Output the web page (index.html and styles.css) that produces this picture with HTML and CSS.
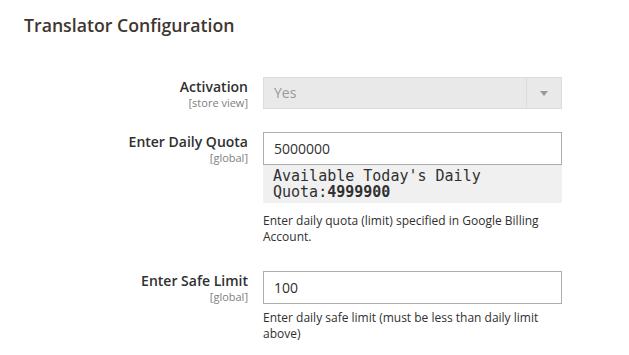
FILE: index.html
```html
<!DOCTYPE html>
<html lang="en">
<head>
    <meta charset="UTF-8">
    <title>Translator Configuration</title>
    <link rel="stylesheet" href="styles.css">
</head>
<body>

    <div class="section">
        <h2 class="section-title">Translator Configuration</h2>

        <!-- Activation -->
        <div class="row row-first">
            <div class="label">
                <span class="label-text">Activation</span>
                <span class="scope">[store view]</span>
            </div>
            <div class="control">
                <div class="select disabled">
                    <span class="select-value">Yes</span>
                    <span class="select-arrow"></span>
                </div>
            </div>
        </div>

        <!-- Daily quota -->
        <div class="row">
            <div class="label">
                <span class="label-text">Enter Daily Quota</span>
                <span class="scope">[global]</span>
            </div>
            <div class="control">
                <input type="text" class="input-text" value="5000000">
                <pre class="quota-box">Available Today's Daily
Quota:<b>4999900</b></pre>
                <p class="note note-quota">Enter daily quota (limit) specified in Google Billing Account.</p>
            </div>
        </div>

        <!-- Safe limit -->
        <div class="row row-safe">
            <div class="label">
                <span class="label-text">Enter Safe Limit</span>
                <span class="scope">[global]</span>
            </div>
            <div class="control">
                <input type="text" class="input-text" value="100">
                <p class="note">Enter daily safe limit (must be less than daily limit above)</p>
            </div>
        </div>
    </div>

</body>
</html>
```

FILE: styles.css
```css
/* Page */
body {
    margin: 0;
    padding: 0;
    background: #ffffff;
    color: #303030;
    font-family: 'Open Sans', 'Liberation Sans', sans-serif;
}

.section {
    padding: 13px 0 0 0;
}

/* Section heading */
.section-title {
    margin: 0 0 0 24px;
    font-size: 17.7px;
    font-weight: 600;
    line-height: 24px;
    color: #41362f;
}

/* Field rows */
.row {
    display: grid;
    grid-template-columns: 248px 299px;
    column-gap: 15px;
    margin-top: 23px;
}

.row-first {
    margin-top: 40px;
}

.row-safe {
    margin-top: 26px;
}

.label {
    display: flex;
    flex-direction: column;
    align-items: flex-end;
    text-align: right;
    padding-top: 1px;
}

.label-text {
    font-size: 14px;
    font-weight: 600;
    line-height: 18px;
    color: #303030;
}

.scope {
    font-size: 11px;
    line-height: 13px;
    color: #808080;
}

/* Select */
.select {
    display: flex;
    height: 32px;
    box-sizing: border-box;
    border: 1px solid #adadad;
}

.select.disabled {
    background: #e9e9e9;
    border-color: #dcdcdc;
}

.select-value {
    flex: 1;
    padding-left: 10px;
    font-size: 14px;
    line-height: 30px;
    color: #999999;
}

.select-arrow {
    width: 34px;
    border-left: 1px solid #dcdcdc;
    position: relative;
}

.select-arrow::after {
    content: '';
    position: absolute;
    top: 13px;
    left: 13px;
    border-left: 4px solid transparent;
    border-right: 4px solid transparent;
    border-top: 5px solid #9a9a9a;
}

/* Inputs */
.input-text {
    display: block;
    width: 299px;
    height: 33px;
    box-sizing: border-box;
    margin: 0;
    padding: 0 10px;
    border: 1px solid #adadad;
    font-family: 'Open Sans', 'Liberation Sans', sans-serif;
    font-size: 14px;
    color: #303030;
    outline: none;
}

/* Remaining quota */
.quota-box {
    margin: 0;
    padding: 3px 10px 3px 10px;
    background: #f0f0f0;
    font-family: 'DejaVu Sans Mono', 'Liberation Mono', monospace;
    font-size: 15px;
    line-height: 16px;
    color: #303030;
}

.quota-box b {
    font-weight: bold;
}

/* Comments under fields */
.note {
    margin: 6px 0 0 0;
    font-size: 12px;
    line-height: 16px;
    color: #303030;
}

.note-quota {
    margin-top: 10px;
}
```
